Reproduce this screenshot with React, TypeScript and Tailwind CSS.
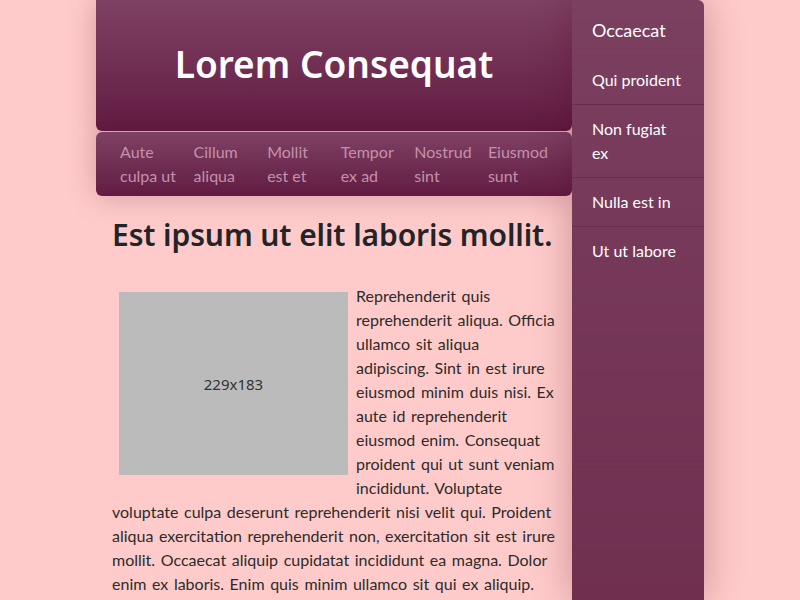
import React from "react";

const navItems = [
  "Aute culpa ut",
  "Cillum aliqua",
  "Mollit est et",
  "Tempor ex ad",
  "Nostrud sint",
  "Eiusmod sunt",
];

const sideItems = ["Qui proident", "Non fugiat ex", "Nulla est in", "Ut ut labore"];

const App = () => {
  return (
    <div
      className="min-h-[600px] bg-[#ffcbca] text-[#212529]"
      style={{ fontFamily: 'Lato, "Noto Sans", sans-serif' }}
    >
      <div className="mx-auto flex w-[608px]">
        {/* main column */}
        <div className="w-[476px]">
          <header className="flex h-[131px] items-center justify-center rounded-b-md bg-gradient-to-b from-[#7e4163] to-[#621b43] pb-1 shadow-[0_0_30px_rgba(80,0,30,0.25)]">
            <h1 className="font-['Noto_Sans'] text-[37px] font-semibold leading-none text-white">Lorem Consequat</h1>
          </header>
          <nav className="mt-px rounded-md bg-gradient-to-b from-[#7e4163] to-[#621b43] px-4 py-2 shadow-[0_0_30px_rgba(80,0,30,0.25)]">
            <ul className="flex">
              {navItems.map((item) => (
                <li key={item} className="flex-1 px-2 text-[16px] leading-6 text-[#c590ab]">
                  {item}
                </li>
              ))}
            </ul>
          </nav>
          <main className="px-4">
            <h2 className="mt-[21px] font-['Noto_Sans'] text-[30px] font-semibold leading-9 tracking-[-0.1px] text-[#212529]">
              Est ipsum ut elit laboris mollit.
            </h2>
            <div className="mt-[31px] text-[16px] leading-6 text-[#2b2b2b] [word-spacing:1.5px]">
              <div className="float-left mb-2 ml-[7px] mr-[8px] mt-2 flex h-[183px] w-[229px] items-center justify-center bg-[#bbbbbb] font-['Noto_Sans'] text-[15px] text-[#333] [word-spacing:0]">
                229x183
              </div>
              <p>
                Reprehenderit quis reprehenderit aliqua. Officia ullamco sit aliqua adipiscing. Sint in est irure
                eiusmod minim duis nisi. Ex aute id reprehenderit eiusmod enim. Consequat proident qui ut sunt veniam
                incididunt. Voluptate voluptate culpa deserunt reprehenderit nisi velit qui. Proident aliqua
                exercitation reprehenderit non, exercitation sit est irure mollit. Occaecat aliquip cupidatat
                incididunt ea magna. Dolor enim ex laboris. Enim quis minim ullamco sit qui ex aliquip.
              </p>
            </div>
          </main>
        </div>

        {/* sidebar */}
        <aside className="min-h-[600px] w-[132px] rounded-tr-md bg-gradient-to-b from-[#7b3f60] to-[#702f4f] text-white shadow-[0_0_40px_rgba(80,0,30,0.3)]">
          <div className="px-5 pb-3 pt-4 text-[18px] leading-7">Occaecat</div>
          <ul>
            {sideItems.map((item, i) => (
              <li
                key={item}
                className={`px-5 py-3 text-[16px] leading-6 ${
                  i < sideItems.length - 1 ? "border-b border-[#6a2d4e]" : ""
                }`}
              >
                {item}
              </li>
            ))}
          </ul>
        </aside>
      </div>
    </div>
  );
};

export default App;
